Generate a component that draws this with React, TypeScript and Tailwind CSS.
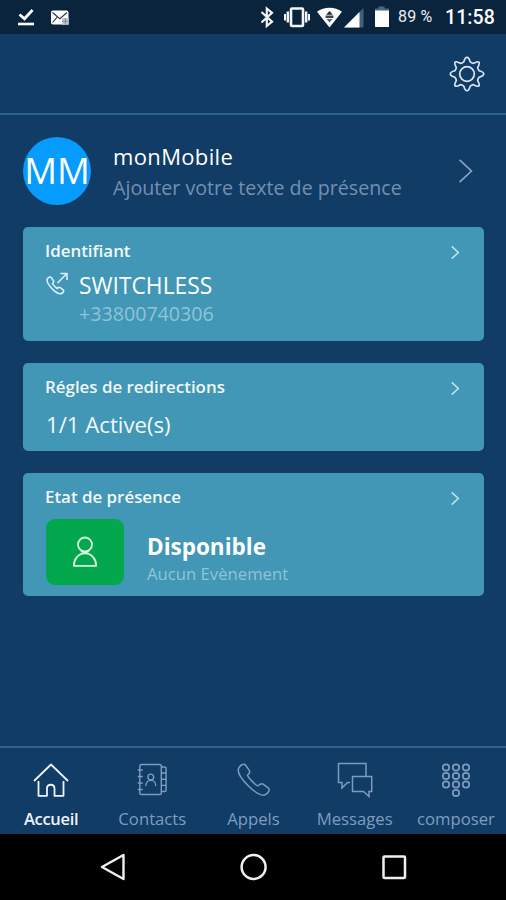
import type { ReactNode } from "react";
import clsx from "clsx";

/* ---------- Status bar ---------- */

function StatusBar() {
  return (
    <div className="flex h-[34px] shrink-0 items-center bg-[#0a243d] pl-[17px] text-white">
      {/* Download done */}
      <svg width="18" height="34" viewBox="0 0 18 34" fill="none" stroke="#fff">
        <path d="M2.5 14.5l5 4.2L15.5 10" strokeWidth="2.8" />
        <path d="M1 24h16" strokeWidth="2.6" />
      </svg>
      {/* Mail */}
      <svg className="ml-[15px]" width="20" height="34" viewBox="0 0 20 34" fill="none">
        <rect x="1" y="10.5" width="17.5" height="14" rx="2" fill="#fff" />
        <path d="M2.5 12.5l7.3 6.2 7.3-6.2M2.5 22.5l4.5-5.2" stroke="#24384c" strokeWidth="1.1" />
        <path d="M12 18h6.8v6.8H12z" fill="#c4cbd0" />
        <path d="M15.3 18v6.8M12 21.3h6.5" stroke="#77848f" strokeWidth="0.9" />
      </svg>

      {/* Bluetooth */}
      <svg className="ml-[190px]" width="16" height="34" viewBox="0 0 16 34" fill="none" stroke="#f2f4f6" strokeWidth="2.2">
        <path d="M1.5 12l10.5 9.6-5.2 4.4V8.5l5.2 4.4L1.5 22.5" />
      </svg>
      {/* Vibrate */}
      <svg className="ml-[7px]" width="28" height="34" viewBox="0 0 28 34" fill="none" stroke="#f2f4f6">
        <rect x="8" y="8.5" width="12" height="17.5" rx="1" strokeWidth="2.6" />
        <path d="M4.8 11.5v11M23.2 11.5v11" strokeWidth="2.4" />
        <path d="M2 14v6.5M26 14v6.5" strokeWidth="2" />
      </svg>
      {/* Wifi */}
      <svg className="ml-[5px]" width="27" height="34" viewBox="0 0 27 34">
        <path d="M1 11.8C8 6.3 19 6.3 26 11.8L13.5 27.5z" fill="#fff" />
        <path d="M13.5 11l3.3 3.8h-6.6z" fill="#14293d" />
        <path d="M9.6 15.5h7.8V18H9.6z" fill="#33475a" />
        <path d="M10.5 19h6l-3 3.5z" fill="#5a6874" />
      </svg>
      {/* Signal */}
      <svg className="ml-[1px]" width="20" height="34" viewBox="0 0 20 34">
        <path d="M19.5 8v19.5H0z" fill="#3f6079" />
        <path d="M15.5 12v15.5H0z" fill="#fff" />
      </svg>
      {/* Battery */}
      <svg className="ml-[10px]" width="16" height="34" viewBox="0 0 16 34">
        <path d="M4.5 6.5h6v2H15V11H1V8.5h3.5z" fill="#4a667d" />
        <path d="M1 10.5h14V27H1z" fill="#fff" />
      </svg>

      <span className="ml-[8px] w-[47px] whitespace-nowrap font-['Roboto',sans-serif] text-[16px] leading-[32px] tracking-[0.2px] text-[#e8edf1]">
        89 %
      </span>
      <span className="whitespace-nowrap font-['Roboto',sans-serif] text-[19.5px] font-medium leading-[33px] tracking-[0.1px]">
        11:58
      </span>
    </div>
  );
}

/* ---------- Shared ---------- */

function Chevron({ className }: { className?: string }) {
  return (
    <svg className={className} viewBox="0 0 10 16" fill="none" stroke="currentColor">
      <path d="M1.5 1.5L8.5 8l-7 6.5" strokeWidth="1.6" vectorEffect="non-scaling-stroke" />
    </svg>
  );
}

interface CardProps {
  title: string;
  className: string;
  children: ReactNode;
}

function Card({ title, className, children }: CardProps) {
  return (
    <section className={clsx("ml-[23px] mr-[22px] flex flex-col rounded-[5px] bg-[#4197b5] pl-[23px] pr-[24px]", className)}>
      <div className="flex h-[46px] shrink-0 items-center justify-between">
        <h2 className="-ml-px mt-px whitespace-nowrap text-[16.9px] font-semibold leading-[24px] text-[#f1f8fb]">{title}</h2>
        <Chevron className="mt-[5px] h-[15px] w-[10px] text-[#c0e2ef]" />
      </div>
      {children}
    </section>
  );
}

/* ---------- Tab icons ---------- */

function HomeIcon() {
  return (
    <svg width="36" height="36" viewBox="0 0 36 36" fill="none" stroke="currentColor" strokeWidth="1.8" strokeLinejoin="round">
      <path d="M1 19L18 2.5 35 19" />
      <path d="M5.5 19v14.8H14v-7.300c0-5 7.500-5 7.500 0v7.300h9V19" />
    </svg>
  );
}

function ContactsIcon() {
  return (
    <svg width="36" height="36" viewBox="0 0 36 36" fill="none" stroke="currentColor" strokeWidth="1.4" strokeLinejoin="round">
      <rect x="5.800" y="2.500" width="21.500" height="30" rx="1.500" />
      <path d="M3.800 8h5M3.800 14.500h5M3.800 21h5M3.800 27.500h5" />
      <path d="M27.300 5h3.300q1.500 0 1.500 1.500V28q0 1.500-1.500 1.500h-3.300M27.300 11h4.800M27.300 17.200h4.800M27.300 23.400h4.800" />
      <circle cx="16.800" cy="15" r="2.900" />
      <path d="M11.800 24c0-7.500 10-7.500 10 0" />
    </svg>
  );
}

function PhoneIcon() {
  return (
    <svg width="36" height="36" viewBox="0 0 36 36" fill="none" stroke="currentColor" strokeWidth="1.5" strokeLinejoin="round">
      <path d="M3.200 5.200C5 2.800 8 1.200 9.600 3.200l3.700 5.200c1.200 1.800-.2 3.400-1.800 4.800-1 .9 9.500 11.300 10.500 10.600 1.600-1.400 3.300-2.800 5-1.600l5.200 3.700c2 1.500.6 4.400-2 6.300-3.200 2.400-9.200.2-17.700-8.200C3.800 15.500.6 8.800 3.200 5.200z" />
    </svg>
  );
}

function MessagesIcon() {
  return (
    <svg width="36" height="36" viewBox="0 0 36 36" fill="none" stroke="currentColor" strokeWidth="1.5">
      <path d="M29 14V1.500H1.500v19H5V26l5.500-5.500H13" />
      <path d="M15.500 14.500h19.200v15H32v5l-5.500-5h-11z" />
    </svg>
  );
}

const DIALS = [
  [8, 5.5], [18, 5.5], [28, 5.5],
  [8, 14], [18, 14], [28, 14],
  [8, 22.5], [18, 22.5], [28, 22.5],
  [18, 31],
];

function DialpadIcon() {
  return (
    <svg width="36" height="36" viewBox="0 0 36 36" fill="none" stroke="currentColor" strokeWidth="1.7">
      {DIALS.map(([x, y]) => (
        <circle key={`${x}-${y}`} cx={x} cy={y} r="3.2" />
      ))}
    </svg>
  );
}

const TABS = [
  { label: "Accueil", icon: <HomeIcon />, active: true },
  { label: "Contacts", icon: <ContactsIcon /> },
  { label: "Appels", icon: <PhoneIcon /> },
  { label: "Messages", icon: <MessagesIcon /> },
  { label: "composer", icon: <DialpadIcon /> },
];

/* ---------- App ---------- */

export default function App() {
  return (
    <div className="flex h-[900px] w-[506px] flex-col overflow-hidden bg-[#113c66] font-['Open_Sans','Noto_Sans',sans-serif] text-white">
      <StatusBar />

      <header className="flex h-[81px] shrink-0 items-center justify-end border-b-2 border-[#2f648c] pr-[21px]">
        <svg width="36" height="36" viewBox="0 0 36 36" fill="none" stroke="#dce6f2" strokeWidth="1.7" strokeLinejoin="round">
          <path d="M14.8 5.9Q16 1.3 18 1.3T21.2 5.9Q23.2 7.4 24.6 7.3 28.8 5 29.9 6.1T28.7 11.4Q28.6 12.8 30.1 14.8 34.7 16 34.7 18T30.1 21.2Q28.6 23.2 28.7 24.6 31 28.8 29.9 29.9T24.6 28.7Q23.2 28.6 21.2 30.1 20 34.7 18 34.7T14.8 30.1Q12.8 28.6 11.4 28.7 7.2 31 6.1 29.9T7.3 24.6Q7.4 23.2 5.9 21.2 1.3 20 1.3 18T5.9 14.8Q7.4 12.8 7.3 11.4 5 7.2 6.1 6.1T11.4 7.3Q12.8 7.4 14.8 5.9z" />
          <circle cx="18" cy="18" r="7.3" />
        </svg>
      </header>

      {/* Profile */}
      <div className="flex h-[112px] shrink-0 items-center pl-[23px] pr-[32px]">
        <div className="flex h-[68px] w-[68px] shrink-0 items-center justify-center rounded-full bg-[#069bff] pb-[2px] text-[36.5px] leading-none">
          MM
        </div>
        <div className="ml-[22px] mt-[2px] flex flex-1 flex-col whitespace-nowrap">
          <span className="text-[22px] leading-[30px] tracking-[0.35px]">monMobile</span>
          <span className="mt-[2px] text-[19.65px] leading-[30px] text-[#7490b1]">Ajouter votre texte de présence</span>
        </div>
        <Chevron className="h-[28px] w-[17px] text-[#8ba7c6]" />
      </div>

      <Card title="Identifiant" className="h-[114px]">
        <div className="flex">
          <svg className="-mt-px shrink-0" width="22" height="24" viewBox="0 0 22 24" fill="none" stroke="#d8f0f8" strokeWidth="1.6" strokeLinejoin="round">
            <path d="M1.300 7.200C2 5.400 4.200 4.400 5.300 5.600l2.200 3.100c.7 1.100-.1 2-1.100 2.900 1.500 2.200 2.900 3.600 4.900 4.900.9-1 1.800-1.500 2.900-.8l3 2.200c1 .8.200 2.600-1.200 3.400-2 1.100-5.500-.2-9.500-4.200S.5 9.500 1.300 7.200z" />
            <path d="M11.500 11L20.500 2M14.500 1.500h6.500V8" />
          </svg>
          <div className="ml-[11px] flex flex-col whitespace-nowrap">
            <span className="text-[22.8px] leading-[26px]">SWITCHLESS</span>
            <span className="mt-[2px] text-[19.65px] leading-[26px] text-[#8fc3d8]">+33800740306</span>
          </div>
        </div>
      </Card>

      <Card title="Régles de redirections" className="mt-[22px] h-[88px]">
        <span className="whitespace-nowrap text-[22.2px] leading-[32px] text-[#f1f8fb]">1/1 Active(s)</span>
      </Card>

      <Card title="Etat de présence" className="mt-[22px] h-[123px]">
        <div className="flex">
          <div className="flex h-[66px] w-[78px] shrink-0 items-center justify-center rounded-[9px] bg-[#03a84e]">
            <svg width="26" height="32" viewBox="0 0 26 32" fill="none" stroke="#d5f3df" strokeWidth="1.8" strokeLinejoin="round">
              <circle cx="13" cy="8.5" r="7" />
              <path d="M9 15.200c1.500 1.600 6.500 1.600 8 0M1.800 29.800c0-6.500 4.500-12.500 11.200-12.500s11.200 6 11.200 12.500z" />
            </svg>
          </div>
          <div className="ml-[23px] flex flex-col whitespace-nowrap pt-[14px]">
            <span className="text-[22.5px] font-bold leading-[28px]">Disponible</span>
            <span className="text-[16.7px] leading-[26px] text-[#8fc3d8]">Aucun Evènement</span>
          </div>
        </div>
      </Card>

      {/* Tabs */}
      <nav className="mt-auto flex h-[88px] shrink-0 border-t-2 border-[#2f648c]">
        {TABS.map((tab) => (
          <div
            key={tab.label}
            className={clsx(
              "flex flex-1 basis-0 flex-col items-center whitespace-nowrap pl-px pt-[14px]",
              tab.active ? "text-[#eef2fa]" : "text-[#7d9cc0]",
            )}
          >
            {tab.icon}
            <span
              className={clsx(
                "mt-[9px] leading-[24px]",
                tab.active ? "text-[16.5px] font-semibold tracking-[-0.3px]" : "text-[16.7px]",
              )}
            >
              {tab.label}
            </span>
          </div>
        ))}
      </nav>

      {/* Android navigation */}
      <div className="flex h-[66px] shrink-0 items-center justify-between bg-black pl-[99px] pr-[98px]">
        <svg width="28" height="28" viewBox="0 0 28 28" fill="none" stroke="#f0f0f0" strokeWidth="2.4" strokeLinejoin="round">
          <path d="M24.500 2v24L3 14z" />
        </svg>
        <svg width="28" height="28" viewBox="0 0 28 28" fill="none" stroke="#f0f0f0" strokeWidth="2.5">
          <circle cx="13.6" cy="14" r="12" />
        </svg>
        <svg width="28" height="28" viewBox="0 0 28 28" fill="none" stroke="#f0f0f0" strokeWidth="2.5" strokeLinejoin="round">
          <rect x="3.5" y="3.5" width="21.5" height="21.5" rx="1" />
        </svg>
      </div>
    </div>
  );
}
